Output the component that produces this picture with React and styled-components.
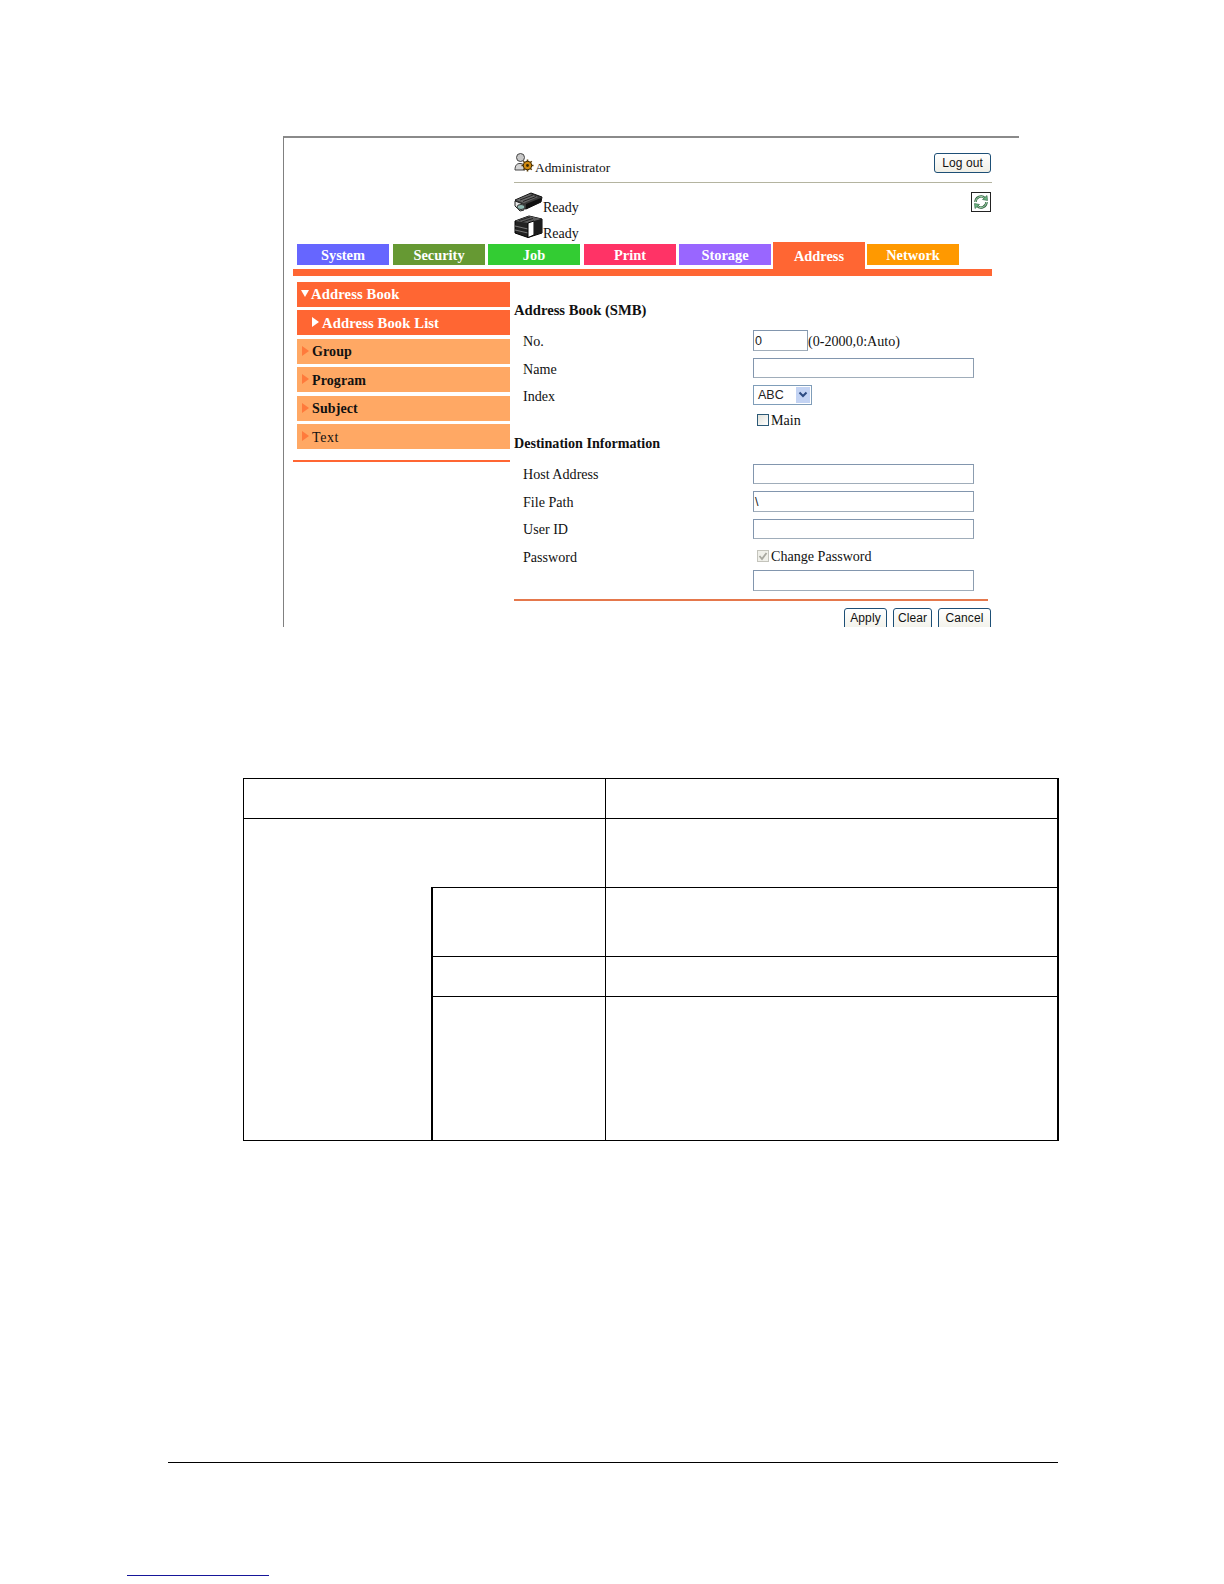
import React from 'react';
import styled, { createGlobalStyle } from 'styled-components';

const Global = createGlobalStyle`
  html, body { margin: 0; padding: 0; background: #fff; }
  body { font-family: "Liberation Serif", "Times New Roman", serif; color: #111; }
  * { box-sizing: border-box; }
`;

const Page = styled.div`
  width: 1224px;
  height: 1584px;
  padding-top: 136px;
  overflow: hidden;
  display: flex;
  flex-direction: column;
`;

const Frame = styled.section`
  margin-left: 283px;
  width: 736px;
  height: 491px;
  border-top: 2px solid #8a8a8a;
  border-left: 1px solid #808080;
  overflow: hidden;
  flex: none;
`;

const Header = styled.header`
  height: 104px;
  margin-left: 230px;
  width: 478px;
`;

const UserBar = styled.div`
  height: 45px;
  padding: 15px 1px 0 0;
  border-bottom: 1px solid #b4b4a0;
  display: flex;
  justify-content: space-between;
  align-items: flex-start;
`;

const Who = styled.div`
  display: flex;
  align-items: flex-end;
  height: 20px;
  font-size: 13.4px;
  line-height: 11px;
`;

const AppButton = styled.button`
  height: ${p => p.$h || 25}px;
  width: ${p => p.$w}px;
  padding: 0 0 ${p => p.$pb || 0}px;
  border: 1px solid #1d4f76;
  border-radius: 3px;
  background: linear-gradient(#ffffff, #f0efe6);
  font: 12px "Liberation Sans", Arial, sans-serif;
  letter-spacing: 0.1px;
  color: #111;
  flex: none;
`;

const StatusBar = styled.div`
  display: flex;
  justify-content: space-between;
  padding: 9px 1px 0 0;
`;

const Devices = styled.div`
  display: flex;
  flex-direction: column;
  gap: 3px;
`;

const Device = styled.div`
  display: flex;
  align-items: flex-end;
  height: ${p => p.$h}px;
  font-size: 14px;
  line-height: 8px;
`;

const Refresh = styled.div`
  width: 20px;
  height: 20px;
  border: 1px solid #222;
  background: #fff;
  display: flex;
  align-items: center;
  justify-content: center;
`;

const Tabs = styled.nav`
  display: flex;
  align-items: flex-start;
  height: 27px;
  margin-left: 13px;
`;

const Tab = styled.div`
  width: 92px;
  height: ${p => (p.$active ? 27 : 21)}px;
  margin-top: ${p => (p.$active ? 0 : 2)}px;
  margin-right: ${p => p.$gap}px;
  padding-top: ${p => (p.$active ? 6 : 3)}px;
  background: ${p => p.$color};
  color: #fff;
  font-size: 14.4px;
  font-weight: bold;
  line-height: 17px;
  text-align: center;
  flex: none;
`;

const TabRule = styled.div`
  height: 7px;
  width: 699px;
  margin-left: 9px;
  background: #ff6633;
`;

const Body = styled.div`
  display: flex;
`;

const Side = styled.aside`
  width: 217px;
  margin-left: 9px;
  margin-right: 4px;
  flex: none;
`;

const Menu = styled.div`
  padding: 6px 0 11px 4px;
  border-bottom: 2px solid #ff6633;
  display: flex;
  flex-direction: column;
`;

const MenuItem = styled.div`
  height: 25px;
  margin-bottom: ${p => p.$mb}px;
  background: ${p => (p.$on ? '#ff6633' : '#ffa864')};
  color: ${p => (p.$on ? '#fff' : '#111')};
  font-size: ${p => (p.$on ? 14.67 : 14)}px;
  font-weight: ${p => (p.$plain ? 'normal' : 'bold')};
  line-height: 25px;
  letter-spacing: ${p => (p.$plain ? 0.6 : 0.1)}px;
  padding-left: ${p => p.$pad}px;
  padding-top: ${p => p.$pt || 0}px;
  display: flex;
  align-items: center;
  gap: ${p => p.$tg}px;
`;

const Tri = styled.span`
  width: 0;
  height: 0;
  flex: none;
  margin-bottom: 2px;
  ${p => p.$down
    ? `border-left: 4px solid transparent; border-right: 4px solid transparent; border-top: 7px solid #fff;`
    : `border-top: 5px solid transparent; border-bottom: 5px solid transparent; border-left: 7px solid ${p.$on ? '#fff' : '#ff7a3c'};`}
`;

const Form = styled.div`
  width: 478px;
  padding-top: 26px;
  flex: none;
`;

const Heading = styled.h3`
  height: ${p => p.$h}px;
  margin: 0;
  padding-top: ${p => p.$pt || 0}px;
  font-size: ${p => p.$fs || 14.67}px;
  font-weight: bold;
  line-height: 17px;
`;

const Row = styled.div`
  display: flex;
  height: ${p => p.$h}px;
  padding-left: 9px;
`;

const Label = styled.span`
  width: 230px;
  flex: none;
  padding-top: ${p => p.$pt ?? 3}px;
  font-size: 14.1px;
  line-height: 17px;
`;

const Field = styled.div`
  width: ${p => p.$w || 221}px;
  height: ${p => p.$h || 20}px;
  flex: none;
  border: 1px solid #7f9db9;
  border-color: #8296ae #8c9db0 #a0adba #8296ae;
  background: #fff;
  font: 12.5px/${p => p.$h || 20}px "Liberation Sans", Arial, sans-serif;
  padding-left: 1px;
  color: #222;
`;

const Hint = styled.span`
  margin: 3px 0 0 0;
  font-size: 14.1px;
  line-height: 17px;
`;

const Select = styled.div`
  width: 59px;
  height: 20px;
  border: 1px solid #7f9db9;
  padding: 1px 1px 1px 4px;
  display: flex;
  justify-content: space-between;
  font: 12.5px/16px "Liberation Sans", Arial, sans-serif;
  color: #222;
`;

const SelectArrow = styled.span`
  width: 14px;
  background: #c3d3f3;
  display: flex;
  align-items: center;
  justify-content: center;
`;

const CheckRow = styled.div`
  display: flex;
  align-items: flex-start;
  margin: ${p => p.$mt}px 0 0 4px;
  gap: 2px;
  font-size: 14.1px;
  line-height: 13px;
`;

const Box = styled.span`
  width: 12px;
  height: 12px;
  flex: none;
  border: 1px solid ${p => (p.$off ? '#c4c4bc' : '#2c5a78')};
  background: ${p => (p.$off ? '#f0f0ea' : 'linear-gradient(135deg, #e2e2da, #fff)')};
  display: flex;
  align-items: center;
  justify-content: center;
`;

const FormRule = styled.div`
  width: 474px;
  height: 2px;
  margin-top: 8px;
  background: #e5784c;
`;

const Actions = styled.div`
  display: flex;
  justify-content: flex-end;
  gap: 6px;
  width: 477px;
  margin-top: 7px;
`;

const Grid = styled.table`
  margin: 151px 0 0 243px;
  width: 816px;
  table-layout: fixed;
  border-spacing: 0;
  border-collapse: separate;
  border-top: 1px solid #000;
  border-left: 1px solid #000;
  flex: none;
`;

const Tr = styled.tr`
  height: ${p => p.$h}px;
`;

const Td = styled.td`
  padding: 0;
  border-bottom: 1px solid #000;
  border-right: ${p => (p.$edge ? '2px' : p.$open ? '0' : '1px')} solid #000;
  border-left: ${p => (p.$thick ? '2px solid #000' : '0')};
`;

const FootRule = styled.div`
  margin: 321px 0 0 168px;
  width: 890px;
  height: 1px;
  background: #000;
  flex: none;
`;

const PageLink = styled.div`
  margin: 112px 0 0 127px;
  width: 142px;
  height: 1px;
  background: #16169a;
  flex: none;
`;

const AdminIcon = () => (
  <svg width="21" height="20" viewBox="0 0 21 20">
    <circle cx="6.5" cy="4.5" r="4" fill="#c8c8c8" stroke="#444" />
    <path d="M1 17c0-5 2-6.5 5-6.5s5 1.5 5 6.5z" fill="#d4d4d4" stroke="#444" />
    <circle cx="13.5" cy="12.5" r="4.2" fill="#d08a10" stroke="#3a2a05" />
    <path d="M13.5 6.5v2.2M13.5 16.3v2.2M7.5 12.5h2.2M17.3 12.5h2.2M9.3 8.3l1.5 1.5M16.2 15.2l1.5 1.5M17.7 8.3l-1.5 1.5M10.8 15.2l-1.5 1.5" stroke="#5a3c05" strokeWidth="1.6" />
    <circle cx="13.5" cy="12.5" r="1.4" fill="#3a2a05" />
  </svg>
);

const ScannerIcon = () => (
  <svg width="29" height="20" viewBox="0 0 29 20">
    <path d="M1 8 17 1l11 4-1 5-15 7-4-1z" fill="#3a3a3a" stroke="#111" />
    <path d="M2 8l14-6 8 3-14 6z" fill="#6a6a6a" />
    <path d="M6 8l13-5M9 9.5l13-5" stroke="#222" />
    <path d="M1 9l8 3 1 6-4 1-5-5z" fill="#e8e8e8" stroke="#222" />
    <ellipse cx="7" cy="15" rx="4" ry="2.5" fill="#8fb8b0" stroke="#333" />
    <path d="M12 12l15-6v4l-15 7z" fill="#111" />
  </svg>
);

const PrinterIcon = () => (
  <svg width="29" height="23" viewBox="0 0 29 23">
    <path d="M1 6 15 1l13 3v14l-14 4.5L1 18z" fill="#222" stroke="#000" />
    <path d="M1 6l14-5 13 3-14 4z" fill="#5c5c5c" />
    <path d="M5 5.5l11-3.5M8 7l11-3.5" stroke="#222" />
    <path d="M1 11l13 3M1 15l13 3" stroke="#777" />
    <path d="M14 8l6-2v14l-6 2.5z" fill="#fff" stroke="#000" />
    <path d="M20 6l8-2v14l-8 2z" fill="#1c1c1c" />
  </svg>
);

const RefreshIcon = () => (
  <svg width="16" height="16" viewBox="0 0 16 16" fill="none">
    <path d="M2.5 8A5.5 5.5 0 0 1 12 4.2" stroke="#2c5a3a" strokeWidth="2.4" />
    <path d="M2.5 8A5.5 5.5 0 0 1 12 4.2" stroke="#a8dcb4" strokeWidth="1" />
    <path d="M13.5 8A5.5 5.5 0 0 1 4 11.8" stroke="#2c5a3a" strokeWidth="2.4" />
    <path d="M13.5 8A5.5 5.5 0 0 1 4 11.8" stroke="#a8dcb4" strokeWidth="1" />
    <path d="M9.5 5.5 14.5 6.5 14 1.5z" fill="#6cb884" stroke="#2c5a3a" strokeWidth=".6" />
    <path d="M6.5 10.5 1.5 9.5 2 14.5z" fill="#6cb884" stroke="#2c5a3a" strokeWidth=".6" />
  </svg>
);

const tabs = [
  ['System', '#6666ff', 4],
  ['Security', '#669933', 3],
  ['Job', '#33cc33', 4],
  ['Print', '#ff3366', 3],
  ['Storage', '#9966ff', 2],
  ['Address', '#ff6633', 2, true],
  ['Network', '#ff9900', 0],
];

const menu = [
  { t: 'Address Book', on: true, down: true, pad: 4, tg: 2, mb: 3 },
  { t: 'Address Book List', on: true, pad: 15, tg: 3, mb: 4, pt: 1 },
  { t: 'Group', pad: 5, tg: 3, mb: 3 },
  { t: 'Program', pad: 5, tg: 3, mb: 4, pt: 1 },
  { t: 'Subject', pad: 5, tg: 3, mb: 3 },
  { t: 'Text', pad: 5, tg: 3, mb: 0, plain: true, pt: 1 },
];

export default function App() {
  return (
    <Page>
      <Global />
      <Frame>
        <Header>
          <UserBar>
            <Who><AdminIcon />Administrator</Who>
            <AppButton $w={57} $h={20}>Log out</AppButton>
          </UserBar>
          <StatusBar>
            <Devices>
              <Device $h={20}><ScannerIcon />Ready</Device>
              <Device $h={23}><PrinterIcon />Ready</Device>
            </Devices>
            <Refresh><RefreshIcon /></Refresh>
          </StatusBar>
        </Header>
        <Tabs>
          {tabs.map(([t, c, g, a]) => (
            <Tab key={t} $color={c} $gap={g} $active={a}>{t}</Tab>
          ))}
        </Tabs>
        <TabRule />
        <Body>
          <Side>
            <Menu>
              {menu.map(m => (
                <MenuItem key={m.t} $on={m.on} $pad={m.pad} $tg={m.tg} $mb={m.mb} $plain={m.plain} $pt={m.pt}>
                  <Tri $down={m.down} $on={m.on} />
                  {m.t}
                </MenuItem>
              ))}
            </Menu>
          </Side>
          <Form>
            <Heading $h={28}>Address Book (SMB)</Heading>
            <Row $h={28}><Label>No.</Label><Field $w={55} $h={21}>0</Field><Hint>(0-2000,0:Auto)</Hint></Row>
            <Row $h={27}><Label>Name</Label><Field /></Row>
            <Row $h={27}>
              <Label>Index</Label>
              <Select>ABC<SelectArrow>
                <svg width="10" height="8" viewBox="0 0 10 8"><path d="M1.5 1.5 5 5l3.5-3.5" fill="none" stroke="#2c4a80" strokeWidth="2" /></svg>
              </SelectArrow></Select>
            </Row>
            <Row $h={18}><Label /><CheckRow $mt={2}><Box />Main</CheckRow></Row>
            <Heading $h={34} $pt={5} $fs={14.1}>Destination Information</Heading>
            <Row $h={27}><Label $pt={2}>Host Address</Label><Field /></Row>
            <Row $h={28}><Label>File Path</Label><Field $h={21}>\</Field></Row>
            <Row $h={28}><Label $pt={2}>User ID</Label><Field /></Row>
            <Row $h={23}>
              <Label $pt={2}>Password</Label>
              <CheckRow $mt={3}>
                <Box $off>
                  <svg width="10" height="10" viewBox="0 0 10 10"><path d="M1.5 5 4 8l4.5-6" fill="none" stroke="#a8a8a0" strokeWidth="1.8" /></svg>
                </Box>
                Change Password
              </CheckRow>
            </Row>
            <Row $h={21}><Label /><Field $h={21} /></Row>
            <FormRule />
            <Actions>
              <AppButton $w={43} $pb={5}>Apply</AppButton>
              <AppButton $w={39} $pb={5}>Clear</AppButton>
              <AppButton $w={53} $pb={5}>Cancel</AppButton>
            </Actions>
          </Form>
        </Body>
      </Frame>
      <Grid>
        <colgroup>
          <col style={{ width: 187 }} />
          <col style={{ width: 175 }} />
          <col style={{ width: 453 }} />
        </colgroup>
        <tbody>
          <Tr $h={40}><Td colSpan={2} /><Td $edge /></Tr>
          <Tr $h={69}><Td rowSpan={4} $open /><Td /><Td $edge /></Tr>
          <Tr $h={69}><Td $thick /><Td $edge /></Tr>
          <Tr $h={40}><Td $thick /><Td $edge /></Tr>
          <Tr $h={144}><Td $thick /><Td $edge /></Tr>
        </tbody>
      </Grid>
      <FootRule />
      <PageLink />
    </Page>
  );
}
